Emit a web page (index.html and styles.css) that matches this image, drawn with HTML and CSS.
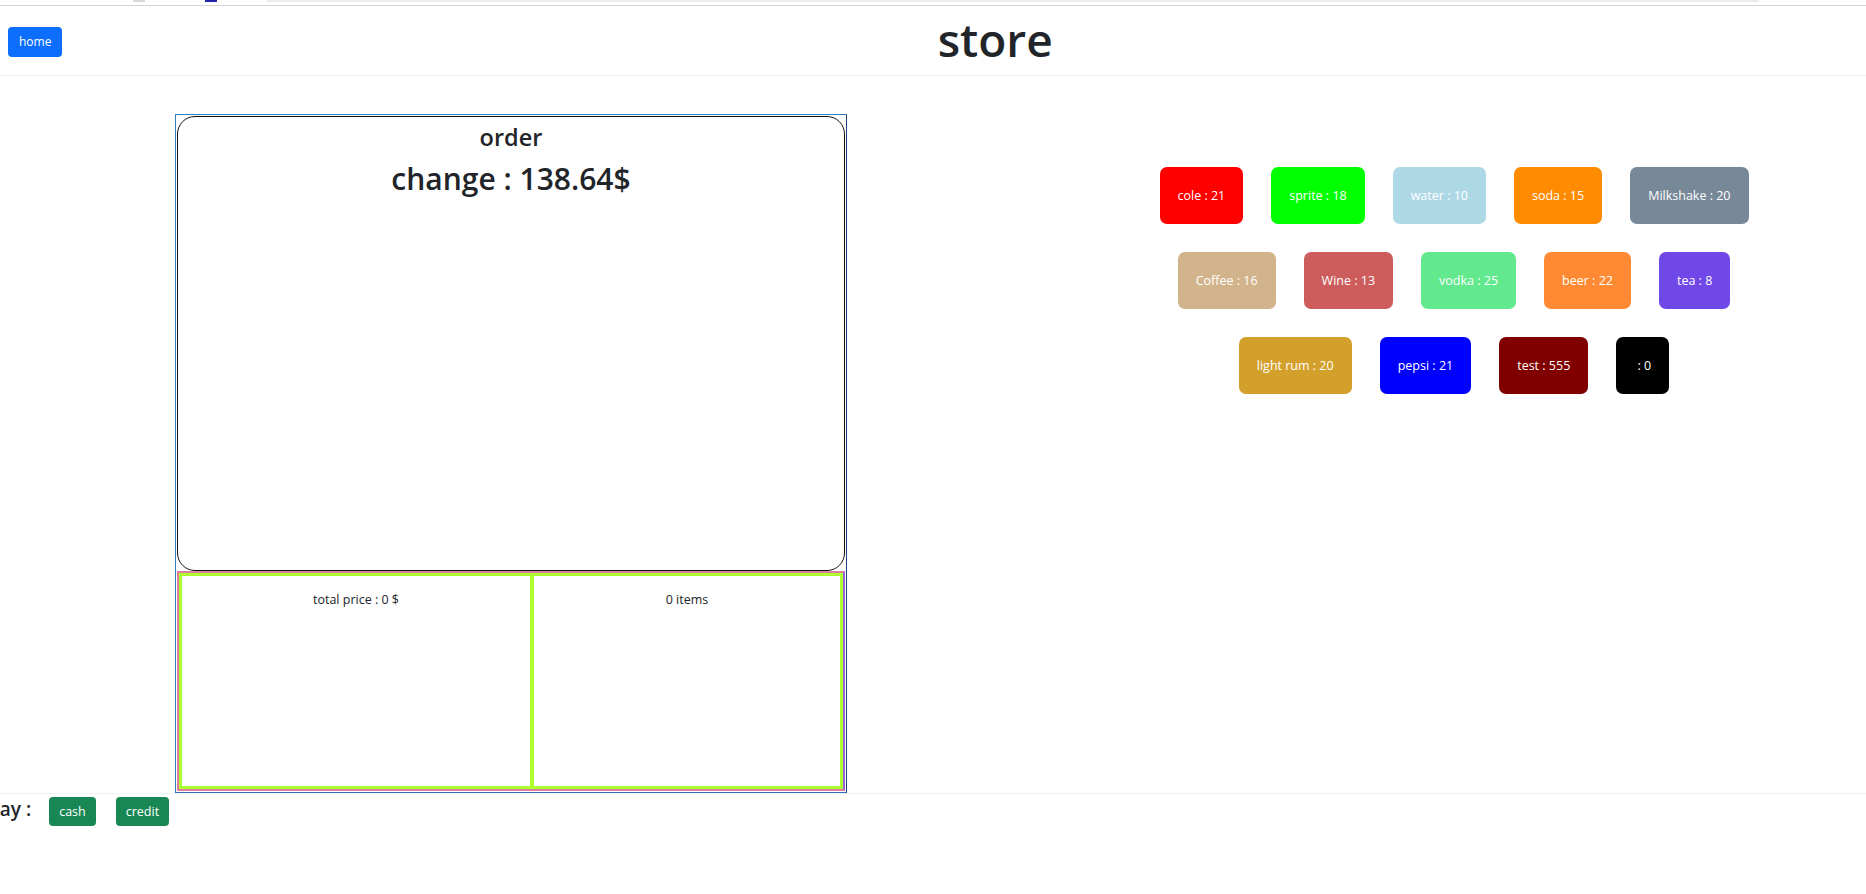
FILE: index.html
```html
<!DOCTYPE html>
<html lang="en">
<head>
<meta charset="utf-8">
<title>store</title>
<link rel="stylesheet" href="styles.css">
</head>
<body>
<div class="chrome">
  <span class="chrome-tab"></span>
  <span class="chrome-dot"></span>
  <span class="chrome-bar"></span>
</div>
<header class="topbar">
  <button class="btn btn-home">home</button>
  <h1 class="title">store</h1>
</header>
<main class="main">
  <section class="order">
    <div class="order-card">
      <h4 class="order-title">order</h4>
      <h2 class="order-change">change : 138.64$</h2>
    </div>
    <div class="order-summary">
      <div class="summary-cell cell-price">total price : 0 $</div>
      <div class="summary-cell cell-items">0 items</div>
    </div>
  </section>
  <section class="drinks">
    <button class="drink c-cole">cole : 21</button>
    <button class="drink c-sprite">sprite : 18</button>
    <button class="drink c-water">water : 10</button>
    <button class="drink c-soda">soda : 15</button>
    <button class="drink c-milk">Milkshake : 20</button>
    <button class="drink c-coffee">Coffee : 16</button>
    <button class="drink c-wine">Wine : 13</button>
    <button class="drink c-vodka">vodka : 25</button>
    <button class="drink c-beer">beer : 22</button>
    <button class="drink c-tea">tea : 8</button>
    <button class="drink c-rum">light rum : 20</button>
    <button class="drink c-pepsi">pepsi : 21</button>
    <button class="drink c-test">test : 555</button>
    <button class="drink c-empty"> : 0</button>
  </section>
</main>
<footer class="paybar">
  <span class="pay-label">pay :</span>
  <button class="btn btn-pay btn-cash">cash</button>
  <button class="btn btn-pay btn-credit">credit</button>
</footer>
</body>
</html>
```
FILE: styles.css
```css
* { box-sizing: border-box; }

html, body {
  margin: 0;
  padding: 0;
  background: #ffffff;
  overflow: hidden;
}

body {
  font-family: "Open Sans", "Noto Sans", sans-serif;
  color: #212529;
  width: 1866px;
  height: 894px;
}

/* remnant of browser chrome at the top */
.chrome {
  display: flex;
  height: 6px;
  border-bottom: 1px solid #d4d4d4;
}
.chrome-tab {
  margin-left: 133px;
  width: 12px;
  height: 2px;
  background: #d8d8d8;
}
.chrome-dot {
  margin-left: 60px;
  width: 12px;
  height: 2px;
  background: #2222a8;
}
.chrome-bar {
  margin-left: 50px;
  width: 1492px;
  height: 2px;
  background: #ececec;
}

/* header */
.topbar {
  display: flex;
  align-items: center;
  height: 70px;
  border-bottom: 1px solid #f1f1f1;
}

.btn {
  font-family: inherit;
  border: none;
  color: #ffffff;
  border-radius: 4px;
  cursor: pointer;
}

.btn-home {
  margin-left: 8px;
  margin-top: 2px;
  background: #0d6efd;
  font-size: 12px;
  line-height: 18px;
  padding: 6px 11px;
}

.title {
  flex: 1;
  margin: 0 0 4px;
  padding-left: 62px;
  text-align: center;
  font-size: 46px;
  font-weight: 600;
  line-height: 56px;
  color: #212529;
}

/* main */
.main {
  display: flex;
  align-items: flex-start;
}

.order {
  margin-top: 38px;
  margin-left: 175px;
  width: 672px;
  border: 1px solid #2f7dc6;
  border-right-color: #1d3f7a;
  border-bottom-color: #2f6fc0;
  padding: 1px;
}

.order-card {
  height: 455px;
  border: 1px solid #111111;
  border-radius: 18px;
  text-align: center;
  padding-top: 6px;
}

.order-title {
  margin: 0;
  font-size: 23.5px;
  font-weight: 600;
  line-height: 29px;
}

.order-change {
  margin: 8px 0 0;
  font-size: 30px;
  font-weight: 600;
  line-height: 37px;
}

.order-summary {
  display: flex;
  height: 220px;
  border: 2px solid #e07ca0;
  border-right-color: #9a62d6;
}

.summary-cell {
  border: 3px solid #adff2f;
  text-align: center;
  font-size: 12.5px;
  line-height: 19px;
  padding-top: 14px;
}

.cell-price {
  flex: 0 0 353px;
  border-right-width: 2px;
}

.cell-items {
  flex: 1;
  border-left-width: 2px;
}

/* drink buttons */
.drinks {
  margin-top: 77px;
  margin-left: 267px;
  width: 680px;
  display: flex;
  flex-wrap: wrap;
  justify-content: center;
}

.drink {
  margin: 14px;
  border: none;
  border-radius: 7px;
  color: #ffffff;
  font-family: inherit;
  font-size: 12.5px;
  line-height: 19px;
  padding: 19px 18px;
  white-space: pre;
}

.c-cole { background: #ff0000; }
.c-sprite { background: #00ff00; }
.c-water { background: #add8e6; }
.c-soda { background: #ff8c00; }
.c-milk { background: #778899; }
.c-coffee { background: #d2b48c; }
.c-wine { background: #cd5c5c; }
.c-vodka { background: #62e98e; }
.c-beer { background: #ff8a33; }
.c-tea { background: #7048e8; }
.c-rum { background: #d4a02c; }
.c-pepsi { background: #0000ff; }
.c-test { background: #800000; }
.c-empty { background: #000000; }

/* footer */
.paybar {
  display: flex;
  align-items: baseline;
  border-top: 1px solid #f1f1f1;
  padding-top: 1px;
}

.pay-label {
  margin-left: -12px;
  font-size: 19px;
  font-weight: 600;
  line-height: 29px;
}

.btn-pay {
  background: #198754;
  font-size: 12.5px;
  line-height: 17px;
  padding: 6px 10px;
}

.btn-cash { margin-left: 18px; }
.btn-credit { margin-left: 20px; }
```
